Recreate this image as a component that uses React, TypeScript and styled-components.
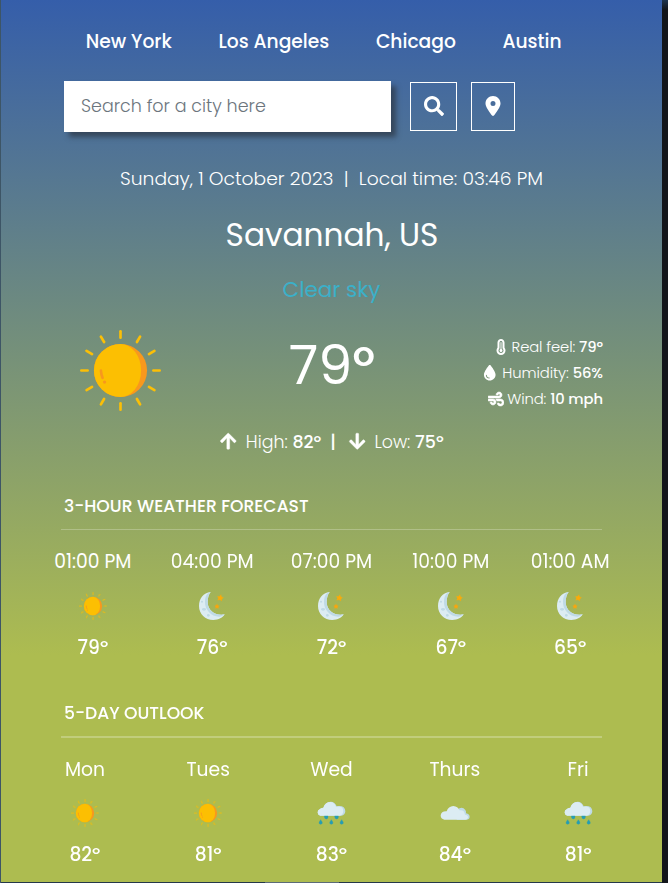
import React from "react";
import styled, { createGlobalStyle } from "styled-components";
import { FaArrowDown, FaArrowUp, FaSearch, FaWind } from "react-icons/fa";
import { FaDroplet, FaLocationDot, FaTemperatureFull } from "react-icons/fa6";

const GlobalStyle = createGlobalStyle`
  * { box-sizing: border-box; }
  body {
    margin: 0;
    background: #12151a;
    color: #fff;
    font-family: Poppins, Inter, "Liberation Sans", sans-serif;
    overflow: hidden;
  }
`;

const Page = styled.div`
  width: 668px;
  height: 883px;
  padding: 0 6px 0 1px;
  background: linear-gradient(to right, #3d5566 1px, transparent 1px),
    linear-gradient(to bottom, #1d3450, #12151a 10px);
`;

const Card = styled.main`
  display: flow-root;
  height: 882px;
  background: linear-gradient(to bottom, #355eaa 0, #adbc50 655px);
`;

const Footer = styled.div`
  height: 1px;
  background: #24384a;
  padding-left: 264px;
`;

const ScrollThumb = styled.div`
  width: 74px;
  height: 1px;
  background: #5b6b78;
`;

const Nav = styled.nav`
  display: flex;
  gap: 46.6px;
  margin-top: 28px;
  padding-left: 84.8px;
`;

const NavLink = styled.a`
  font-size: 18.7px;
  font-weight: 500;
  line-height: 28px;
  white-space: nowrap;
`;

const SearchForm = styled.form`
  display: flex;
  align-items: center;
  margin: 25px 0 0 63px;
`;

const SearchInput = styled.input`
  width: 327px;
  height: 51px;
  padding: 0 17px 2px;
  border: 0;
  border-radius: 0;
  background: #fff;
  box-shadow: 5px 5px 5px rgba(43, 52, 64, 0.68);
  font: 300 17.5px Poppins, Inter, sans-serif;
  &::placeholder {
    color: #6c757d;
    opacity: 1;
  }
`;

const IconButton = styled.button<{ $width: number; $gap: number }>`
  display: flex;
  align-items: center;
  justify-content: center;
  width: ${(p) => p.$width}px;
  height: 49px;
  margin-left: ${(p) => p.$gap}px;
  padding: 0 0 2px;
  border: 1px solid #fff;
  background: transparent;
  color: #fff;
  font-size: 20px;
`;

const DateLine = styled.p`
  margin: 33px 0 0;
  font-size: 18.7px;
  font-weight: 300;
  line-height: 28px;
  text-align: center;
  white-space: pre;
`;

const City = styled.h1`
  margin: 22px 0 0;
  padding-left: 1px;
  font-size: 31.2px;
  font-weight: 400;
  line-height: 40px;
  text-align: center;
`;

const Condition = styled.p`
  margin: 20px 0 0;
  color: #3bb0c9;
  font-size: 21.5px;
  line-height: 30px;
  text-align: center;
`;

const Current = styled.section`
  display: grid;
  grid-template-columns: 238px 1fr 238px;
  height: 83px;
  margin-top: 25px;
`;

const CurrentIcon = styled.div`
  display: flex;
  justify-content: center;
  height: 81px;
`;

const CurrentTemp = styled.div`
  padding-left: 1px;
  font-size: 54px;
  line-height: 70px;
  text-align: center;
`;

const Degree = styled.span`
  font-size: 0.96em;
  font-weight: 500;
`;

const Details = styled.div`
  display: flex;
  flex-direction: column;
  padding: 4px 59px 0 0;
`;

const Detail = styled.div<{ $gap: number; $size: number }>`
  display: flex;
  align-items: center;
  justify-content: flex-end;
  height: 26px;
  font-size: 14.75px;
  font-weight: 300;
  letter-spacing: -0.09px;
  white-space: pre;
  svg {
    margin-right: ${(p) => p.$gap}px;
    font-size: ${(p) => p.$size}px;
  }
  b {
    font-weight: 500;
  }
`;

const HighLow = styled.div`
  display: flex;
  align-items: center;
  justify-content: center;
  height: 28px;
  margin-top: 14.5px;
  font-size: 17.4px;
  font-weight: 300;
  white-space: pre;
  svg {
    margin-right: 8px;
    font-size: 18.5px;
    stroke: #fff;
    stroke-width: 10px;
  }
  b {
    font-weight: 500;
  }
`;

const Divider = styled.b`
  margin: 0 12px 0 9px;
`;

const Heading = styled.h2<{ $top: number; $line: number }>`
  margin: ${(p) => p.$top}px 60px 0;
  padding: 0 0 10.5px 3px;
  border-bottom: ${(p) => p.$line}px solid rgba(255, 255, 255, 0.25);
  font-size: 17.18px;
  font-weight: 500;
  line-height: 26px;
`;

const Forecast = styled.section<{ $width: number; $iconGap: number }>`
  display: grid;
  grid-template-columns: repeat(5, 1fr);
  width: ${(p) => p.$width}px;
  margin: 18px auto 0;
  svg {
    margin: ${(p) => p.$iconGap}px 0 13.5px;
  }
`;

const Slot = styled.div`
  display: flex;
  flex-direction: column;
  align-items: center;
  font-size: 18.7px;
  line-height: 28px;
  white-space: nowrap;
`;

const SlotTemp = styled.div`
  font-weight: 500;
`;

type Kind = "sun" | "moon" | "rain" | "cloud";

const Sun = ({ size, rays }: { size: number; rays: number }) => (
  <svg width={size} height={size} viewBox="-122 -122 244 244">
    <g stroke="#fbbf07" strokeWidth="8" strokeLinecap="round" opacity={rays}>
      {Array.from({ length: 12 }, (_, i) => (
        <path key={i} d="M0-99V-118" transform={`rotate(${i * 30})`} />
      ))}
    </g>
    <circle r="80" fill="#f8981d" />
    <path d="M0-80A80 80 0 0 0 0 80A62 80 0 0 0 0-80Z" fill="#fcbf02" />
    <path d="M-59 0Q-58 14-54 22" fill="none" stroke="#f8981d" strokeWidth="8" strokeLinecap="round" />
    <circle cx="-48" cy="35" r="5" fill="#f8981d" />
  </svg>
);

const star = "M0-9L3-3L9-2L5 3L6 9L0 6L-6 9L-5 3L-9-2L-3-3Z";

const Moon = () => (
  <svg width="28" height="28" viewBox="0 0 84 84">
    <path d="M38 0C16 2 3 20 3 42C3 66 22 84 46 84C62 84 75 77 80 67C58 72 29 60 29 30C29 18 32 8 38 0Z" fill="#dcecf3" />
    <path d="M38 0C27 3 22 12 21 28C19 54 42 76 66 74C72 72 78 70 80 67C58 72 29 60 29 30C29 18 32 8 38 0Z" fill="#bfdae6" />
    <g fill="#bfdae6">
      <circle cx="12" cy="29" r="3" />
      <ellipse cx="18" cy="52" rx="6" ry="4" />
      <circle cx="31" cy="70" r="4" />
    </g>
    <path d={star} transform="translate(67 17) rotate(12)" fill="#fbab08" stroke="#fbab08" />
    <path d={star} transform="translate(57 43) scale(.75)" fill="#fba60c" stroke="#fba60c" />
  </svg>
);

const Rain = () => (
  <svg width="30" height="28" viewBox="0 0 90 84">
    <path d="M13 50A10 10 0 0 1 11 31Q14 26 22 26Q27 9 44 8Q57 8 62 22Q87 18 88 37Q87 49 76 50Z" fill="#bfdae6" />
    <path d="M13 50A10 10 0 0 1 11 31Q14 26 22 26Q27 9 44 9Q56 11 60 23Q82 20 82 36Q81 48 72 50Z" fill="#dcecf3" />
    <g fill="#259db4" stroke="#259db4">
      <path d="M25 51H36Q37 60 31 60Q25 60 25 51ZM56 51H67Q68 60 62 60Q56 60 56 51Z" />
      <path d="M14 62Q8 70 9 73Q14 79 19 73Q20 70 14 62ZM46 62Q40 70 41 73Q46 79 51 73Q52 70 46 62ZM77 62Q71 70 72 73Q77 79 82 73Q83 70 77 62Z" />
    </g>
  </svg>
);

const Cloud = () => (
  <svg width="30" height="28" viewBox="0 0 90 84">
    <path d="M52 32Q66 20 76 33Q79 37 78 43Q89 45 89 54Q88 62 79 62H50Z" fill="#bfdae6" />
    <path d="M13 62Q2 60 2 49Q4 36 20 37Q25 22 40 21Q54 22 58 34Q73 31 75 47Q85 48 84 56Q82 62 76 62Z" fill="#dcecf3" />
  </svg>
);

const WeatherIcon = ({ kind }: { kind: Kind }) => {
  if (kind === "sun") return <Sun size={28} rays={0.85} />;
  if (kind === "moon") return <Moon />;
  if (kind === "rain") return <Rain />;
  return <Cloud />;
};

type Entry = [string, Kind, number];

const hours: Entry[] = [
  ["01:00 PM", "sun", 79],
  ["04:00 PM", "moon", 76],
  ["07:00 PM", "moon", 72],
  ["10:00 PM", "moon", 67],
  ["01:00 AM", "moon", 65],
];

const days: Entry[] = [
  ["Mon", "sun", 82],
  ["Tues", "sun", 81],
  ["Wed", "rain", 83],
  ["Thurs", "cloud", 84],
  ["Fri", "rain", 81],
];

type RowProps = { entries: Entry[]; width: number; iconGap: number };

const ForecastRow = ({ entries, width, iconGap }: RowProps) => (
  <Forecast $width={width} $iconGap={iconGap}>
    {entries.map(([label, kind, temp]) => (
      <Slot key={label}>
        <div>{label}</div>
        <WeatherIcon kind={kind} />
        <SlotTemp>{temp}º</SlotTemp>
      </Slot>
    ))}
  </Forecast>
);

export default function App() {
  return (
    <Page>
      <GlobalStyle />
      <Card>
        <Nav>
          {["New York", "Los Angeles", "Chicago", "Austin"].map((city) => (
            <NavLink key={city}>{city}</NavLink>
          ))}
        </Nav>
        <SearchForm>
          <SearchInput placeholder="Search for a city here" />
          <IconButton type="button" $width={47} $gap={19} aria-label="Search">
            <FaSearch />
          </IconButton>
          <IconButton type="button" $width={44} $gap={14} aria-label="Use my location">
            <FaLocationDot />
          </IconButton>
        </SearchForm>
        <DateLine>{"Sunday, 1 October 2023  |  Local time: 03:46 PM"}</DateLine>
        <City>Savannah, US</City>
        <Condition>Clear sky</Condition>
        <Current>
          <CurrentIcon>
            <Sun size={81} rays={1} />
          </CurrentIcon>
          <CurrentTemp>79<Degree>º</Degree></CurrentTemp>
          <Details>
            <Detail $gap={3} $size={16}>
              <FaTemperatureFull />
              <span>Real feel: <b>79º</b></span>
            </Detail>
            <Detail $gap={5} $size={15.5}>
              <FaDroplet />
              <span>Humidity: <b>56%</b></span>
            </Detail>
            <Detail $gap={3} $size={16}>
              <FaWind stroke="#fff" strokeWidth={18} />
              <span>Wind: <b>10 mph</b></span>
            </Detail>
          </Details>
        </Current>
        <HighLow>
          <FaArrowUp />
          <span>High: <b>82º</b></span>
          <Divider>|</Divider>
          <FaArrowDown />
          <span>Low: <b>75º</b></span>
        </HighLow>
        <Heading $top={37} $line={1}>3-HOUR WEATHER FORECAST</Heading>
        <ForecastRow entries={hours} width={596.5} iconGap={16} />
        <Heading $top={38} $line={2}>5-DAY OUTLOOK</Heading>
        <ForecastRow entries={days} width={616.5} iconGap={15} />
      </Card>
      <Footer>
        <ScrollThumb />
      </Footer>
    </Page>
  );
}
